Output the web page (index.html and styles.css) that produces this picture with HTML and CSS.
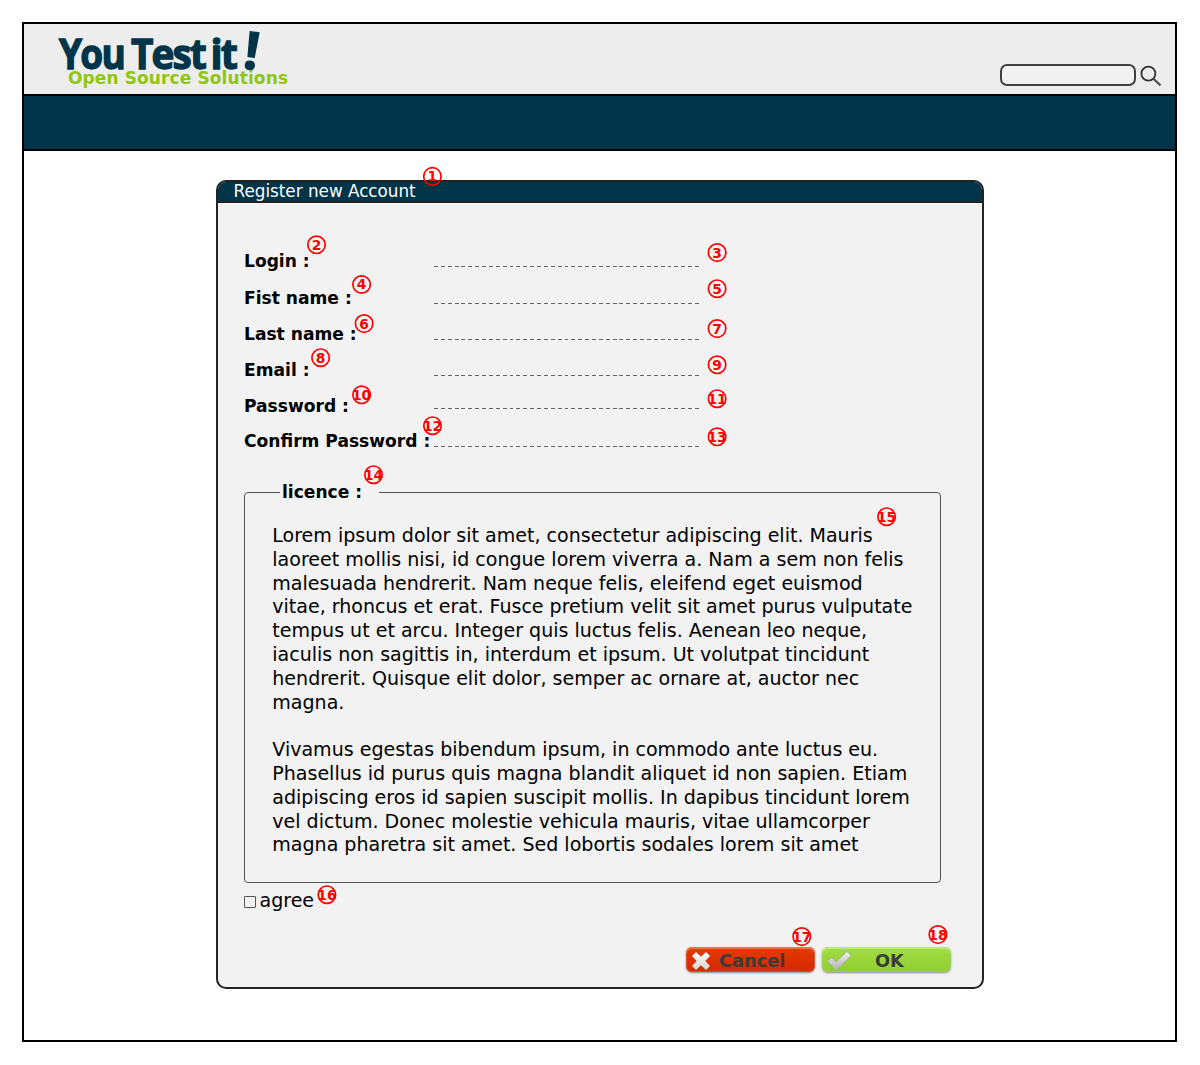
FILE: index.html
```html
<!DOCTYPE html>
<html lang="en">
<head>
<meta charset="utf-8">
<title>You Test it! - Register new Account</title>
<link rel="stylesheet" href="styles.css">
</head>
<body>
<div class="frame">
  <header class="header">
    <svg class="logo" width="240" height="70" viewBox="0 0 240 70" role="img" aria-label="You Test it! Open Source Solutions">
      <g class="logo-name">
        <text x="8" y="44.7" textLength="65" lengthAdjust="spacingAndGlyphs">You</text>
        <text x="80" y="44.7" textLength="74" lengthAdjust="spacingAndGlyphs">Test</text>
        <text x="159.5" y="44.7" textLength="25.5" lengthAdjust="spacingAndGlyphs">it</text>
        <text class="logo-bang" transform="translate(191 44) rotate(8)">!</text>
      </g>
      <text class="logo-tagline" x="17" y="59.5" textLength="220">Open Source Solutions</text>
    </svg>
    <div class="search">
      <input class="search-input" type="text" aria-label="Search">
      <svg class="search-icon" width="24" height="24" viewBox="0 0 24 24">
        <circle cx="9.4" cy="8.6" r="7" />
        <path d="M14.4 13.8 L21.5 20.4" />
      </svg>
    </div>
  </header>
  <nav class="nav"></nav>
  <main class="main">
    <section class="panel">
      <h1 class="panel-title">Register new Account</h1>
      <form class="form">
        <div class="fields">
          <label class="label" for="login">Login :</label><input class="field" id="login">
          <label class="label" for="first">Fist name :</label><input class="field" id="first">
          <label class="label" for="last">Last name :</label><input class="field" id="last">
          <label class="label" for="email">Email :</label><input class="field" id="email">
          <label class="label" for="password">Password :</label><input class="field field-raised" id="password" type="password">
          <label class="label" for="confirm">Confirm Password :</label><input class="field" id="confirm" type="password">
        </div>
        <fieldset class="licence">
          <legend class="legend">licence :</legend>
          <p class="licence-text">Lorem ipsum dolor sit amet, consectetur adipiscing elit. Mauris<br>laoreet mollis nisi, id congue lorem viverra a. Nam a sem non felis<br>malesuada hendrerit. Nam neque felis, eleifend eget euismod<br>vitae, rhoncus et erat. Fusce pretium velit sit amet purus vulputate<br>tempus ut et arcu. Integer quis luctus felis. Aenean leo neque,<br>iaculis non sagittis in, interdum et ipsum. Ut volutpat tincidunt<br>hendrerit. Quisque elit dolor, semper ac ornare at, auctor nec<br>magna.</p>
          <p class="licence-text">Vivamus egestas bibendum ipsum, in commodo ante luctus eu.<br>Phasellus id purus quis magna blandit aliquet id non sapien. Etiam<br>adipiscing eros id sapien suscipit mollis. In dapibus tincidunt lorem<br>vel dictum. Donec molestie vehicula mauris, vitae ullamcorper<br>magna pharetra sit amet. Sed lobortis sodales lorem sit amet</p>
        </fieldset>
        <label class="agree"><input class="checkbox" type="checkbox">agree</label>
        <div class="actions">
          <button class="button button-cancel" type="button">
            <svg class="button-icon" width="24" height="24" viewBox="0 0 24 24">
              <defs><linearGradient id="silver" x1="0" y1="0" x2="0" y2="1"><stop offset="0" stop-color="#fff"/><stop offset="1" stop-color="#d4d4d4"/></linearGradient></defs>
              <path fill="url(#silver)" d="M2 8 L6 4 L11 8.8 L16 4 L20 8 L15.3 13 L20 18 L16 22 L11 17.2 L6 22 L2 18 L6.7 13 Z"/>
            </svg>
            <span class="button-text">Cancel</span>
          </button>
          <button class="button button-ok" type="button">
            <svg class="button-icon" width="28" height="24" viewBox="0 0 28 24">
              <defs><linearGradient id="steel" x1="0" y1="0" x2="0" y2="1"><stop offset="0" stop-color="#eee"/><stop offset="1" stop-color="#b2b2b2"/></linearGradient></defs>
              <path fill="url(#steel)" stroke="#999" stroke-width=".5" d="M1.5 13.3 L5.6 9.5 L10.2 13.9 L21 3.5 L25 7.5 L10.3 22.5 Z"/>
            </svg>
            <span class="button-text">OK</span>
          </button>
        </div>
      </form>
    </section>
  </main>
</div>
<svg class="callouts" width="1200" height="1065" viewBox="0 0 1200 1065">
  <g transform="translate(432.4 176.4)"><circle r="8.7"/><text y="4.9">1</text></g>
  <g transform="translate(316.5 244.8)"><circle r="8.7"/><text y="4.9">2</text></g>
  <g transform="translate(717.1 252.6)"><circle r="8.7"/><text y="4.9">3</text></g>
  <g transform="translate(361.6 284.5)"><circle r="8.7"/><text y="4.9">4</text></g>
  <g transform="translate(717.1 288.7)"><circle r="8.7"/><text y="4.9">5</text></g>
  <g transform="translate(364.1 323.6)"><circle r="8.7"/><text y="4.9">6</text></g>
  <g transform="translate(717.1 328.6)"><circle r="8.7"/><text y="4.9">7</text></g>
  <g transform="translate(320.6 357.7)"><circle r="8.7"/><text y="4.9">8</text></g>
  <g transform="translate(717.1 364.8)"><circle r="8.7"/><text y="4.9">9</text></g>
  <g transform="translate(361.6 394.8)"><circle r="8.7"/><text y="4.9">10</text></g>
  <g transform="translate(717.1 398.7)"><circle r="8.7"/><text y="4.9">11</text></g>
  <g transform="translate(432.5 425.7)"><circle r="8.7"/><text y="4.9">12</text></g>
  <g transform="translate(717.1 436.8)"><circle r="8.7"/><text y="4.9">13</text></g>
  <g transform="translate(373.5 474.7)"><circle r="8.7"/><text y="4.9">14</text></g>
  <g transform="translate(886.6 516.7)"><circle r="8.7"/><text y="4.9">15</text></g>
  <g transform="translate(326.9 894.7)"><circle r="8.7"/><text y="4.9">16</text></g>
  <g transform="translate(801.8 936.6)"><circle r="8.7"/><text y="4.9">17</text></g>
  <g transform="translate(937.9 934.6)"><circle r="8.7"/><text y="4.9">18</text></g>
</svg>
</body>
</html>
```
FILE: styles.css
```css
* { box-sizing: border-box; }
body {
  margin: 0;
  height: 1065px;
  padding: 22px;
  position: relative;
  overflow: hidden;
  background: #fff;
  color: #000;
  font-family: "DejaVu Sans", sans-serif;
}
.frame {
  width: 1155px;
  height: 1020px;
  border: 2px solid #000;
}
.header {
  display: flex;
  justify-content: space-between;
  height: 70px;
  padding-left: 27px;
  background: #ededed;
}
.logo { overflow: visible; }
.logo-name {
  fill: #003449;
  stroke: #003449;
  stroke-width: 1.3;
  font: bold 42px "Open Sans", sans-serif;
  letter-spacing: -2px;
}
.logo-bang { font-size: 52px; }
.logo-tagline {
  fill: #8fc610;
  font: bold 17px "DejaVu Sans", sans-serif;
}
.search {
  display: flex;
  align-items: flex-start;
  gap: 3px;
  padding: 40px 12px 0 0;
}
.search-input {
  width: 136px;
  height: 22px;
  border: 2px solid #404040;
  border-radius: 7px;
  background: #f1f1f1;
  outline: none;
}
.search-icon {
  margin-top: 1px;
  fill: none;
  stroke: #333;
  stroke-width: 1.8;
}
.search-icon path { stroke: #505050; stroke-width: 2.2; }
.nav {
  height: 57px;
  border: solid #000;
  border-width: 2px 0;
  background: #003449;
}
.main {
  display: flex;
  justify-content: center;
  padding: 29px 0 0 1px;
}
.panel {
  width: 768px;
  height: 809px;
  border: 2px solid #222;
  border-radius: 10px;
  background: #f2f2f2;
  overflow: hidden;
}
.panel-title {
  margin: 0;
  height: 21px;
  padding-left: 15.5px;
  border-bottom: 2px solid #222;
  background: #003449;
  color: #fff;
  font-size: 16.8px;
  font-weight: normal;
  line-height: 18px;
}
.form {
  display: flex;
  flex-direction: column;
  padding: 33px 31px 0 26px;
}
.fields {
  display: grid;
  grid-template-columns: 189.5px 268px;
  grid-template-rows: 35px 37px 36px 36px 36px 35px;
  align-items: end;
}
.label {
  font-size: 17.1px;
  font-weight: bold;
  line-height: 20px;
  white-space: nowrap;
}
.field {
  width: 268px;
  height: 20px;
  margin: 0 0 4px;
  padding: 0;
  border: 0;
  outline: none;
  background: repeating-linear-gradient(to right, #666 0 3.9px, transparent 3.9px 6.87px) left bottom / 100% 1px no-repeat;
}
.field-raised { margin-bottom: 7px; }
.licence {
  width: 697px;
  height: 401px;
  margin: 31px 0 0;
  padding: 22px 0 0 27.3px;
  border: 1px solid #555;
  border-radius: 4px;
}
.legend {
  width: 99px;
  margin-left: 7.7px;
  padding: 0 0 0 2px;
  font-size: 17.1px;
  font-weight: bold;
  line-height: 20px;
}
.licence-text {
  margin: 0 0 23.8px;
  font-size: 19.04px;
  line-height: 23.8px;
  white-space: nowrap;
}
.agree {
  display: flex;
  align-items: center;
  gap: 3.5px;
  height: 24px;
  margin-top: 5px;
  font-size: 19.04px;
}
.checkbox {
  appearance: none;
  width: 12px;
  height: 12px;
  margin: 3px 0 0;
  border: 1px solid #555;
  border-radius: 1px;
}
.actions {
  display: flex;
  justify-content: flex-end;
  gap: 7px;
  margin-top: 35px;
}
.button {
  display: grid;
  grid-template-columns: 28px 1fr;
  align-items: center;
  width: 129px;
  height: 25px;
  padding: 0 0 0 4px;
  border: 0;
  border-radius: 6px;
  color: #3b3b3b;
  font: bold 17.8px "DejaVu Sans", sans-serif;
  line-height: 24px;
}
.button-cancel {
  background: linear-gradient(#e63b00, #d42700);
  box-shadow: inset 0 2px 1px #ed7650, inset 0 0 1px 1px #d9532e, 0 1px 2px #888;
}
.button-ok {
  background: linear-gradient(#a2dd43, #8fce31);
  box-shadow: inset 0 2px 1px #bdea7c, inset 0 0 1px 1px #a0cf5c, 0 1px 2px #888;
}
.button-icon { display: block; }
.button-text { padding-top: 2px; text-align: left; }
.button-cancel .button-text { padding-left: 1px; }
.button-ok .button-text { padding-left: 21px; }
.callouts {
  position: absolute;
  left: 0;
  top: 0;
  pointer-events: none;
}
.callouts circle {
  fill: none;
  stroke: #f00;
  stroke-width: 1.7;
}
.callouts text {
  fill: #f00;
  font: bold 13.8px "DejaVu Sans", sans-serif;
  text-anchor: middle;
}
```
